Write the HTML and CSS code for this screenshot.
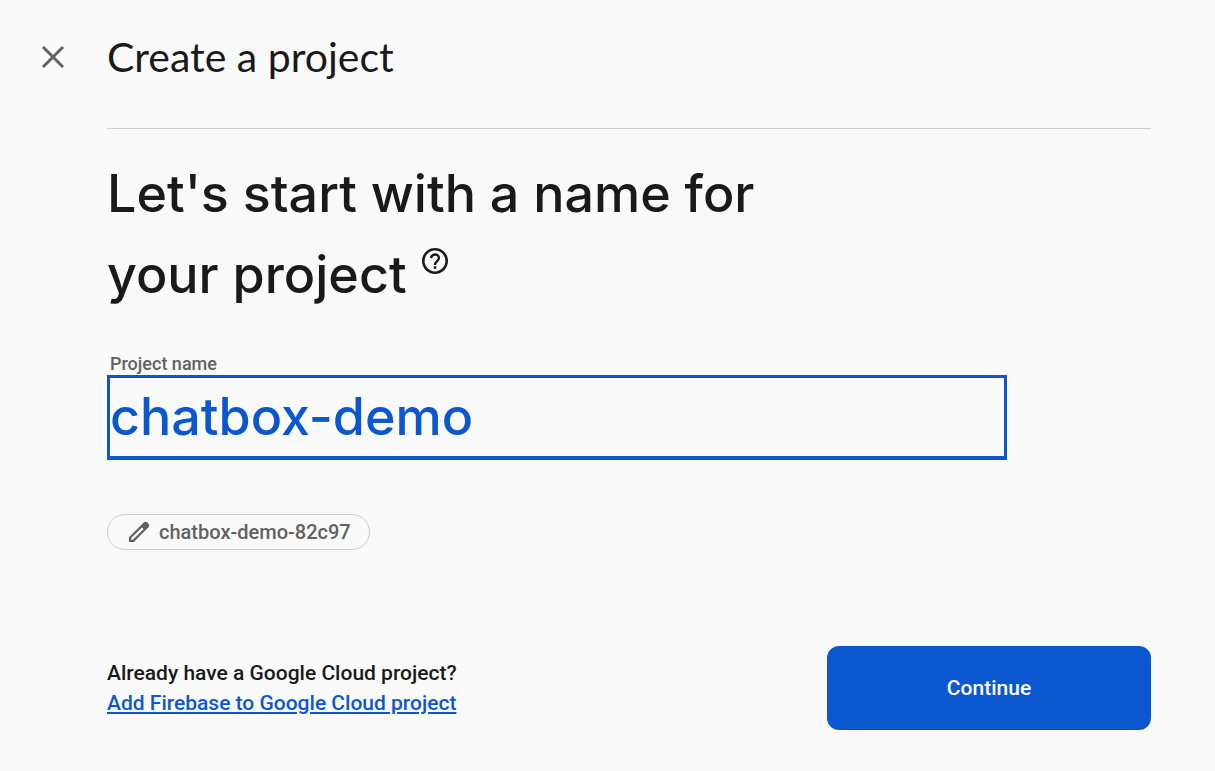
FILE: index.html
```
<!DOCTYPE html>
<html lang="en">
<head>
    <meta charset="UTF-8" />
    <meta name="viewport" content="width=device-width, initial-scale=1" />
    <title>Create a project</title>
    <link rel="stylesheet" href="styles.css">
</head>
<body>

<header class="header">
    <button class="close" type="button" aria-label="Close">
        <svg viewBox="0 0 36 36" width="36" height="36">
            <path d="M8 8L28 28M28 8L8 28" stroke="currentColor" stroke-width="3" fill="none"/>
        </svg>
    </button>
    <h1>Create a project</h1>
</header>

<main class="content">
    <h2 class="question">
        Let's start with a name for your project
        <button class="help" type="button" aria-label="Help">
            <svg viewBox="2 2 20 20" width="26" height="26">
                <path fill="currentColor" d="M11 18h2v-2h-2v2zm1-16C6.48 2 2 6.48 2 12s4.48 10 10 10 10-4.48 10-10S17.52 2 12 2zm0 18c-4.41 0-8-3.59-8-8s3.59-8 8-8 8 3.59 8 8-3.59 8-8 8z"/>
                <path fill="none" stroke="currentColor" stroke-width="1.800" d="M8.900 9.800C9.200 8 10.400 7 12 7s3 1.100 3 2.700C15 12 12 12.300 12 15"/>
            </svg>
        </button>
    </h2>

    <form class="form">
        <label for="projectName">Project name</label>
        <input id="projectName" type="text" value="chatbox-demo" spellcheck="false" autocomplete="off">

        <button class="chip" type="button">
            <svg viewBox="0 0 22 22" width="22" height="22">
                <path fill="currentColor" fill-rule="evenodd" d="M1 21v-4.800L15.500 1.700Q17.500 0 19.500 1.600L20.400 2.500Q22 4.500 20.300 6.500L5.800 21zM3.200 18.800h1.700L15.600 8.100 13.900 6.400 3.200 17.100z"/>
            </svg>
            chatbox-demo-82c97
        </button>

        <div class="footer">
            <div class="existing">
                <p>Already have a Google Cloud project?</p>
                <a href="#">Add Firebase to Google Cloud project</a>
            </div>
            <button class="continue" type="submit">Continue</button>
        </div>
    </form>
</main>

</body>
</html>
```
FILE: styles.css
```
* {
    box-sizing: border-box;
}

body {
    font-family: Roboto, sans-serif;
    background-color: #fafafa;
    color: #1a1a1a;
    margin: 0;
    padding: 0 64px 0 107px;
}

button {
    font-family: inherit;
    cursor: pointer;
}

svg {
    display: block;
}

.header {
    display: flex;
    align-items: center;
    height: 129px;
    padding-bottom: 15px;
    border-bottom: 1px solid #cbcdda;
}

.header h1 {
    margin: 0;
    font-family: Lato, sans-serif;
    font-size: 41px;
    font-weight: 400;
}

.close {
    flex: none;
    width: 36px;
    margin-left: -72px;
    margin-right: 36px;
    padding: 0;
    border: 0;
    background: none;
    color: #616161;
}

.question {
    max-width: 700px;
    margin: 0;
    padding-top: 24px;
    font-family: Inter, sans-serif;
    font-size: 52px;
    font-weight: 500;
    line-height: 81px;
}

.help {
    display: inline-block;
    margin-left: 2px;
    padding: 0;
    border: 0;
    background: none;
    color: inherit;
    vertical-align: 19px;
}

.form {
    padding-top: 37px;
}

.form label {
    display: block;
    padding-left: 3px;
    font-size: 18px;
    font-weight: 500;
    line-height: 23px;
    color: #616161;
}

.form input {
    display: block;
    width: 100%;
    max-width: 900px;
    height: 85px;
    padding: 0 0 2px;
    border: 3px solid #0b57d0;
    border-bottom-width: 4px;
    outline: none;
    background: none;
    font-family: Inter, sans-serif;
    font-size: 52px;
    font-weight: 500;
    color: #0b57d0;
}

.chip {
    display: flex;
    align-items: center;
    gap: 9px;
    height: 36px;
    margin-top: 54px;
    padding: 0 18px 0 20px;
    border: 1px solid #cbcdda;
    border-radius: 18px;
    background: none;
    font-size: 20px;
    font-weight: 500;
    color: #616161;
}

.footer {
    display: flex;
    align-items: center;
    justify-content: space-between;
    padding: 96px 0 40px;
}

.existing {
    font-size: 21px;
    font-weight: 500;
    line-height: 30px;
}

.existing p {
    margin: 0;
}

.existing a {
    color: #0b57d0;
}

.continue {
    width: 324px;
    height: 84px;
    border: 0;
    border-radius: 12px;
    background-color: #0b57d0;
    font-size: 21px;
    font-weight: 500;
    color: #fff;
}
```
